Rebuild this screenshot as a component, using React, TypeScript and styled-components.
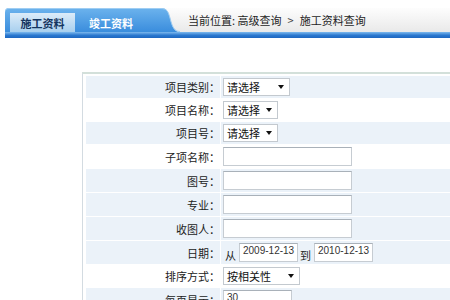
import React from 'react';
import styled, { createGlobalStyle } from 'styled-components';

const GlobalStyle = createGlobalStyle`
  body {
    margin: 0;
    background: #fff;
    font-family: "Noto Sans CJK SC", "Noto Sans", sans-serif;
    font-size: 11px;
    color: #222;
    overflow: hidden;
  }
`;

type Field =
  | { label: string; kind: 'select'; text: string; width: number; shade: boolean }
  | { label: string; kind: 'input'; text?: string; width: number; shade: boolean }
  | { label: string; kind: 'date'; from: string; to: string; shade: boolean };

const fields: Field[] = [
  { label: '项目类别：', kind: 'select', text: '请选择', width: 67, shade: true },
  { label: '项目名称：', kind: 'select', text: '请选择', width: 55, shade: false },
  { label: '项目号：', kind: 'select', text: '请选择', width: 55, shade: true },
  { label: '子项名称：', kind: 'input', width: 129, shade: false },
  { label: '图号：', kind: 'input', width: 129, shade: true },
  { label: '专业：', kind: 'input', width: 129, shade: true },
  { label: '收图人：', kind: 'input', width: 129, shade: true },
  { label: '日期：', kind: 'date', from: '2009-12-13', to: '2010-12-13', shade: true },
  { label: '排序方式：', kind: 'select', text: '按相关性', width: 77, shade: false },
  { label: '每页显示：', kind: 'input', text: '30', width: 69, shade: true },
];

function TabCurve(): JSX.Element {
  return (
    <StyledCurve width="20" height="24" viewBox="0 0 20 24">
      <defs>
        <linearGradient id="tabBlue" x1="0" y1="0" x2="0" y2="1">
          <stop offset="0" stopColor="#6cb3ed" />
          <stop offset="1" stopColor="#3a8ddd" />
        </linearGradient>
      </defs>
      <path d="M0 0 C7 0 8 3 10 10 C12 18 14 24 20 24 L0 24 Z" fill="url(#tabBlue)" />
      <path d="M0 0.5 C7 0.5 8 3 10 10 C12 18 14 23.5 20 23.5" fill="none" stroke="#9fcdf2" strokeWidth="1" />
    </StyledCurve>
  );
}

function App(): JSX.Element {
  return (
    <>
      <GlobalStyle />
      <StyledHeader>
        <StyledTabBar>
          <StyledTabGroup>
            <StyledTab $active>施工资料</StyledTab>
            <StyledTab>竣工资料</StyledTab>
          </StyledTabGroup>
          <TabCurve />
          <StyledCrumb>
            当前位置: 高级查询<StyledCrumbSep>&gt;</StyledCrumbSep>施工资料查询
          </StyledCrumb>
        </StyledTabBar>
        <StyledStripe />
      </StyledHeader>

      <StyledForm>
        {fields.map((f) => (
          <StyledRow key={f.label}>
            <StyledLabel $shade={f.shade}>{f.label}</StyledLabel>
            <StyledValue $shade={f.shade}>
              {f.kind === 'select' && (
                <StyledSelect $width={f.width}>
                  <span>{f.text}</span>
                  <StyledArrow />
                </StyledSelect>
              )}
              {f.kind === 'input' && <StyledInput $width={f.width}>{f.text}</StyledInput>}
              {f.kind === 'date' && (
                <>
                  <StyledSep>从</StyledSep>
                  <StyledInput $width={59}>{f.from}</StyledInput>
                  <StyledSep>到</StyledSep>
                  <StyledInput $width={59}>{f.to}</StyledInput>
                </>
              )}
            </StyledValue>
          </StyledRow>
        ))}
      </StyledForm>
    </>
  );
}

export default App;

const StyledHeader = styled.div`
  padding: 8px 0 0 5px;
`;

const StyledTabBar = styled.div`
  display: flex;
  height: 24px;
`;

const StyledTabGroup = styled.div`
  display: flex;
  align-items: flex-end;
  gap: 2px;
  width: 150px;
  padding-left: 5px;
  background: linear-gradient(#6cb3ed, #3a8ddd);
  border-top-left-radius: 4px;
  box-shadow: inset 0 1px 0 #9fcdf2;
`;

const StyledTab = styled.div<{ $active?: boolean }>`
  display: flex;
  align-items: center;
  justify-content: center;
  width: ${(p) => (p.$active ? 65 : 68)}px;
  height: 19px;
  font-weight: bold;
  font-size: 11px;
  color: ${(p) => (p.$active ? '#14355f' : '#fff')};
  background: ${(p) => (p.$active ? 'linear-gradient(#dcecf9, #a8cfee)' : 'transparent')};
`;

const StyledCurve = styled.svg`
  display: block;
  flex: none;
  background: linear-gradient(#fdfdfd, #e9e9e9);
`;

const StyledCrumb = styled.div`
  flex: 1;
  display: flex;
  align-items: center;
  padding-left: 8px;
  white-space: pre;
  color: #1e1e1e;
  background: linear-gradient(#fdfdfd, #e9e9e9);
`;

const StyledCrumbSep = styled.span`
  margin: 0 6px;
  color: #444;
`;

const StyledStripe = styled.div`
  height: 6px;
  background: linear-gradient(#7db9ee, #2a78cf 55%, #1d66c0);
`;

const StyledForm = styled.div`
  display: flex;
  flex-direction: column;
  gap: 1px;
  width: 520px;
  margin: 34px 0 0 82px;
  padding: 2px 0 0 3px;
  border-left: 1px solid #d3dbe1;
  border-top: 2px solid #d3e0da;
`;

const StyledRow = styled.div`
  display: grid;
  grid-template-columns: 134px 1fr;
  gap: 1px;
`;

const StyledLabel = styled.div<{ $shade: boolean }>`
  display: flex;
  align-items: center;
  justify-content: flex-end;
  line-height: 14px;
  color: #222;
  background: ${(p) => (p.$shade ? '#ebf2f9' : '#fff')};
`;

const StyledValue = styled.div<{ $shade: boolean }>`
  display: flex;
  align-items: center;
  padding: 2px;
  line-height: 14px;
  background: ${(p) => (p.$shade ? '#ebf2f9' : '#fff')};
`;

const StyledSelect = styled.div<{ $width: number }>`
  box-sizing: border-box;
  display: flex;
  align-items: center;
  justify-content: space-between;
  width: ${(p) => p.$width}px;
  height: 18px;
  padding: 0 5px 0 3px;
  background: #fff;
  border: 1px solid #c3c9cf;
  color: #111;
`;

const StyledArrow = styled.span`
  width: 0;
  height: 0;
  border-left: 3px solid transparent;
  border-right: 3px solid transparent;
  border-top: 4px solid #111;
`;

const StyledInput = styled.div<{ $width: number }>`
  box-sizing: border-box;
  width: ${(p) => p.$width}px;
  height: 19px;
  padding: 1px 0 0 3px;
  background: #fff;
  border: 1px solid #c6ccd2;
  border-top-color: #a9b1b9;
  font-family: "Liberation Sans", sans-serif;
  font-size: 10px;
  line-height: 11px;
  color: #333;
`;

const StyledSep = styled.span`
  align-self: flex-end;
  margin: 0 3px 0 2px;
  color: #222;
`;
